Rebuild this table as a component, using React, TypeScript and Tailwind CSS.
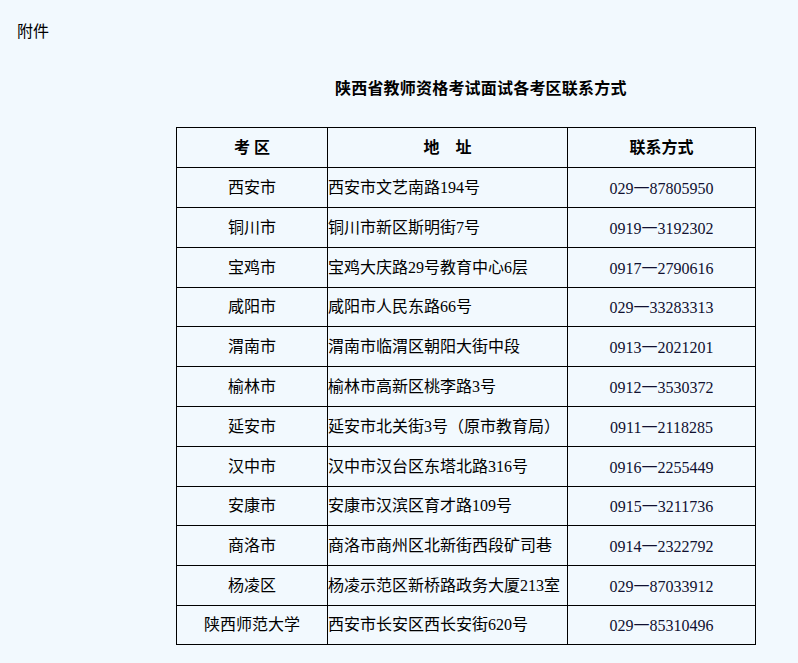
const rows = [
  { area: "西安市", addr: "西安市文艺南路194号", tel: ["029", "87805950"] },
  { area: "铜川市", addr: "铜川市新区斯明街7号", tel: ["0919", "3192302"] },
  { area: "宝鸡市", addr: "宝鸡大庆路29号教育中心6层", tel: ["0917", "2790616"] },
  { area: "咸阳市", addr: "咸阳市人民东路66号", tel: ["029", "33283313"], short: true },
  { area: "渭南市", addr: "渭南市临渭区朝阳大街中段", tel: ["0913", "2021201"] },
  { area: "榆林市", addr: "榆林市高新区桃李路3号", tel: ["0912", "3530372"] },
  { area: "延安市", addr: "延安市北关街3号（原市教育局）", tel: ["0911", "2118285"] },
  { area: "汉中市", addr: "汉中市汉台区东塔北路316号", tel: ["0916", "2255449"] },
  { area: "安康市", addr: "安康市汉滨区育才路109号", tel: ["0915", "3211736"], short: true },
  { area: "商洛市", addr: "商洛市商州区北新街西段矿司巷", tel: ["0914", "2322792"] },
  { area: "杨凌区", addr: "杨凌示范区新桥路政务大厦213室", tel: ["029", "87033912"] },
  { area: "陕西师范大学", addr: "西安市长安区西长安街620号", tel: ["029", "85310496"], short: true },
];

export default function App() {
  return (
    <div className="min-h-screen bg-[#f2f9fe] text-black font-['Liberation_Serif','Noto_Sans_CJK_SC',serif] text-[16px]">
      <p className="pl-[17px] pt-[20px] leading-[24px]">附件</p>

      <h1 className="pl-[335px] mt-[33px] leading-[24px] font-bold tracking-[0.2px]">陕西省教师资格考试面试各考区联系方式</h1>

      <table className="ml-[176px] mt-[26px] w-[579px] table-fixed border-collapse">
        <colgroup>
          <col className="w-[151px]" />
          <col className="w-[240px]" />
          <col className="w-[188px]" />
        </colgroup>
        <thead>
          <tr className="h-[40px]">
            <th className="border border-black text-center font-bold">考 区</th>
            <th className="border border-black text-center font-bold">地　址</th>
            <th className="border border-black text-center font-bold">联系方式</th>
          </tr>
        </thead>
        <tbody>
          {rows.map((r) => (
            <tr key={r.area} className={r.short ? "h-[39px]" : "h-[40px]"}>
              <td className="border border-black text-center">{r.area}</td>
              <td className="border border-black text-left whitespace-nowrap">{r.addr}</td>
              <td className="border border-black text-center text-[#101030]">
                {r.tel[0]}
                <span className="font-['Noto_Sans_CJK_SC',sans-serif]">一</span>
                {r.tel[1]}
              </td>
            </tr>
          ))}
        </tbody>
      </table>
    </div>
  );
}
